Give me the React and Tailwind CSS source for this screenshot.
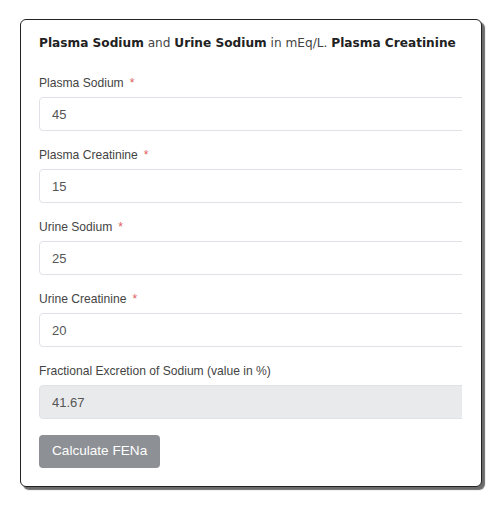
const fields = [
  { label: 'Plasma Sodium', value: '45' },
  { label: 'Plasma Creatinine', value: '15' },
  { label: 'Urine Sodium', value: '25' },
  { label: 'Urine Creatinine', value: '20' },
];

function Field({ label, value, required = true, disabled = false }) {
  return (
    <div className="mb-[14px]">
      <label className="block h-5 text-[12.1px] leading-5 text-[#444]">
        {label}
        {required && <span className="ml-[6px] text-[#e06060]">*</span>}
      </label>
      <div className="mt-1 overflow-hidden">
        <input
          readOnly
          disabled={disabled}
          value={value}
          className={`block h-[34px] w-[calc(100%+40px)] rounded border border-[#dfe2e6] px-3 text-[13px] text-[#555] outline-none ${
            disabled ? 'bg-[#e9eaec]' : 'bg-white'
          }`}
        />
      </div>
    </div>
  );
}

export default function App() {
  return (
    <div className="h-[506px] w-[500px] bg-white pl-5 pt-[19px] font-['Liberation_Sans',Arial,sans-serif]">
      <div className="w-[462px] rounded-md border border-[#222] bg-white pb-[18px] pl-[18px] pr-[19px] pt-[13px] shadow-[3px_3px_1px_#6b6b6b]">
        <p className="mb-5 font-['DejaVu_Sans',Verdana,sans-serif] text-[12.15px] leading-5 text-[#444] whitespace-nowrap">
          <b className="text-[#222]">Plasma Sodium</b> and <b className="text-[#222]">Urine Sodium</b> in mEq/L.{' '}
          <b className="text-[#222]">Plasma Creatinine</b>
        </p>
        {fields.map((f) => (
          <Field key={f.label} label={f.label} value={f.value} />
        ))}
        <Field label="Fractional Excretion of Sodium (value in %)" value="41.67" required={false} disabled />
        <button className="mt-[2px] h-[33px] rounded bg-[#8d9094] px-[13px] text-[13.6px] text-white">
          Calculate FENa
        </button>
      </div>
    </div>
  );
}
